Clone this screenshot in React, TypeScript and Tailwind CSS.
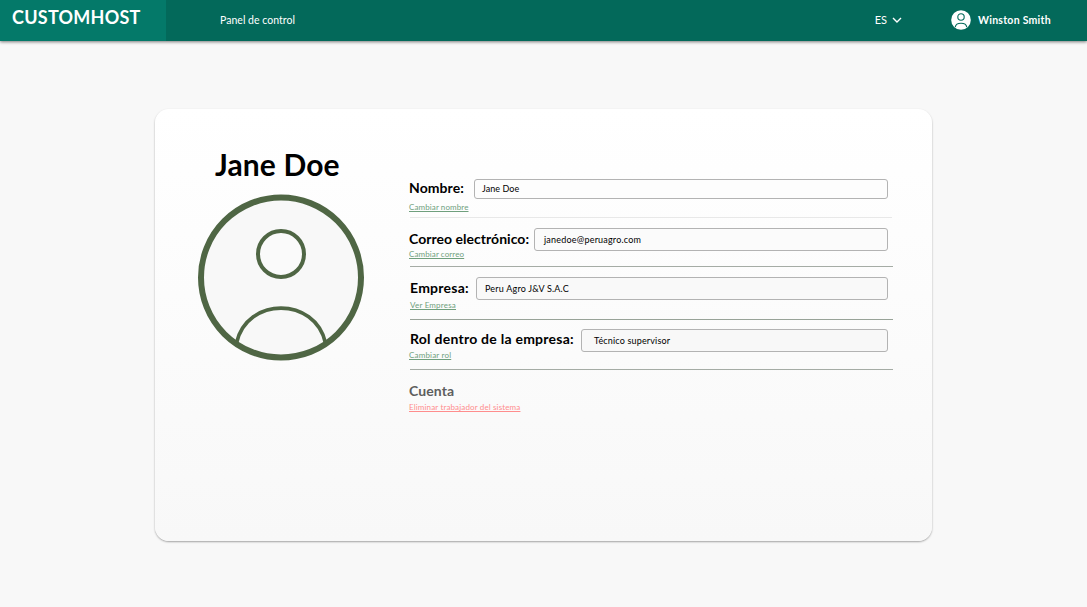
import type { ReactNode } from "react";

function HeaderAvatar() {
  return (
    <svg viewBox="0 0 20 20" className="-mt-px h-5 w-5 shrink-0">
      <circle cx="10" cy="10" r="9.8" fill="#fff" />
      <g fill="none" stroke="#03695a" strokeWidth="1.1">
        <circle cx="10" cy="7" r="3.2" />
        <path d="M4.2 17.1 C5 11.9 15 11.9 15.8 17.1" />
      </g>
    </svg>
  );
}

function ProfileAvatar() {
  return (
    <svg viewBox="0 0 166 167" className="h-[167px] w-[166px]" fill="none" stroke="#4f6644">
      <circle cx="83" cy="83.5" r="80" fill="#f8f8f8" strokeWidth="6" />
      <circle cx="83" cy="60" r="23" fill="#fafafa" strokeWidth="4" />
      <path d="M38.5 149 C49 102.5 117 102.5 127.5 149" strokeWidth="3.7" />
    </svg>
  );
}

type FieldProps = {
  label: string;
  value: string;
  action: string;
  row: string;
  labelClass: string;
  inputClass: string;
  valueClass: string;
  linkClass: string;
};

function Field({ label, value, action, row, labelClass, inputClass, valueClass, linkClass }: FieldProps) {
  return (
    <section className={`flex flex-col items-start ${row}`}>
      <div className="flex w-[479px] items-start">
        <h2 className={`shrink-0 whitespace-nowrap text-[14px] leading-5 font-bold text-black ${labelClass}`}>{label}</h2>
        <div className={`flex flex-1 items-center rounded-[3px] border border-[#b3b3b3] ${inputClass}`}>
          <span className={`text-[9px] leading-3 whitespace-nowrap text-black ${valueClass}`}>{value}</span>
        </div>
      </div>
      <ActionLink className={`text-[#6f9f7d] ${linkClass}`}>{action}</ActionLink>
    </section>
  );
}

function ActionLink({ className, children }: { className: string; children: ReactNode }) {
  return (
    <a
      href="#"
      className={`block text-[8px] leading-[10px] whitespace-nowrap underline decoration-1 underline-offset-1 [text-decoration-skip-ink:none] ${className}`}
    >
      {children}
    </a>
  );
}

function Divider({ className }: { className: string }) {
  return <hr className={`ml-px h-px border-0 ${className}`} />;
}

export default function App() {
  return (
    <div className="flex h-[607px] w-[1087px] flex-col overflow-hidden bg-[#f8f8f8] font-['Lato',sans-serif]">
      <header className="flex h-[41px] shrink-0 bg-[#03695a] text-white shadow-[0_1px_3px_rgba(0,0,0,0.5)]">
        <div className="w-[166px] bg-[#047969] pt-[6px] pl-3">
          <h1 className="text-[18px] leading-[22px] font-bold tracking-[0.25px]">CUSTOMHOST</h1>
        </div>
        <nav className="flex h-10 flex-1 items-center pl-[54px] text-[10.5px]">
          <a href="#" className="pt-[2px] tracking-[0.03px]">Panel de control</a>
          <button className="ml-auto flex items-center gap-[5px]">
            <span className="text-[11px]">ES</span>
            <svg viewBox="0 0 10 6" className="h-1.5 w-2.5" fill="none" stroke="white" strokeWidth="1.4">
              <path d="M1 1 L5 5 L9 1" />
            </svg>
          </button>
          <div className="ml-[49px] flex w-[136px] items-center gap-[7px]">
            <HeaderAvatar />
            <span className="pt-px font-bold tracking-[0.26px] whitespace-nowrap">Winston Smith</span>
          </div>
        </nav>
      </header>
      <main className="flex flex-1 items-start justify-center pt-[68px]">
        <article className="flex h-[432px] w-[777px] rounded-[14px] bg-linear-to-b from-white to-[#f8f8f8] shadow-[0_1px_2px_rgba(0,0,0,0.35)]">
          <aside className="flex w-[254px] flex-col items-start pt-[37px] pl-[43px]">
            <h2 className="ml-[17px] text-[30px] leading-9 font-bold tracking-[0.12px] whitespace-nowrap text-black">Jane Doe</h2>
            <div className="mt-3">
              <ProfileAvatar />
            </div>
          </aside>
          <div className="flex w-[484px] flex-col pt-[68px]">
            <Field
              label="Nombre:" value="Jane Doe" action="Cambiar nombre"
              row="h-10" labelClass="w-[65px] pt-px tracking-[0.08px]"
              inputClass="mt-[2px] h-5 bg-[#fdfdfd]" valueClass="pl-[7px] tracking-[0.05px]" linkClass="mt-[3px] tracking-[0.1px]"
            />
            <Divider className="mr-px bg-[#e8e8e8]" />
            <Field
              label="Correo electrónico:" value="janedoe@peruagro.com" action="Cambiar correo"
              row="h-12 pt-[10px]" labelClass="w-[125px] pt-px tracking-[0.03px]"
              inputClass="h-[23px] bg-[#fbfbfb]" valueClass="pl-[9px] tracking-[0.2px]" linkClass="-mt-[2px] tracking-[0.1px]"
            />
            <Divider className="bg-[#a5aca5]" />
            <Field
              label="Empresa:" value="Peru Agro J&V S.A.C" action="Ver Empresa"
              row="h-[52px] pt-[10px]" labelClass="w-[67px] pl-px pt-px tracking-[0.25px]"
              inputClass="h-[23px] bg-[#f9f9f9]" valueClass="pl-2 tracking-[0.2px]" linkClass="ml-px tracking-[0.2px]"
            />
            <Divider className="bg-[#98a398]" />
            <Field
              label="Rol dentro de la empresa:" value="Técnico supervisor" action="Cambiar rol"
              row="h-[49px] pt-[9px]" labelClass="w-[172px] pl-px tracking-[0.25px]"
              inputClass="h-[23px] bg-[#f8f8f8]" valueClass="pl-3 tracking-[0.17px]" linkClass="-mt-[2px] tracking-[0.18px]"
            />
            <Divider className="bg-[#a5aca5]" />
            <section className="pt-[11px]">
              <h2 className="text-[14px] leading-5 font-bold tracking-[0.1px] text-[#5e5e5e]">Cuenta</h2>
              <ActionLink className="mt-px tracking-[0.14px] text-[#ff8d8d]">Eliminar trabajador del sistema</ActionLink>
            </section>
          </div>
        </article>
      </main>
    </div>
  );
}
